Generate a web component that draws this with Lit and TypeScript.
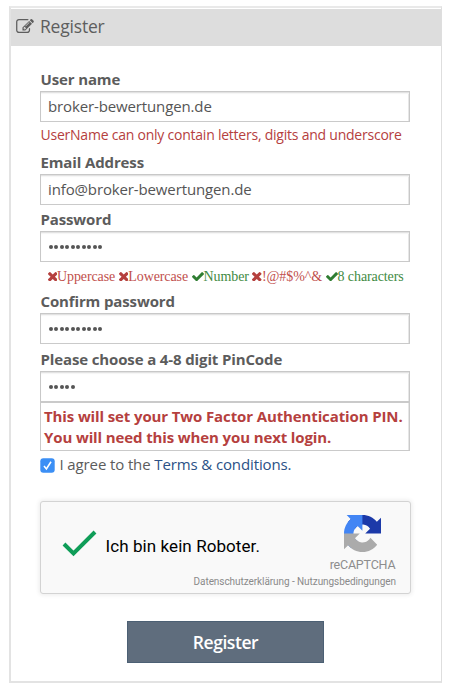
import { LitElement, html, css, svg } from "lit";
import { customElement, property } from "lit/decorators.js";

const TIMES = svg`<path d="M1490 1322q0 40-28 68l-136 136q-28 28-68 28t-68-28l-294-294-294 294q-28 28-68 28t-68-28l-136-136q-28-28-28-68t28-68l294-294-294-294q-28-28-28-68t28-68l136-136q28-28 68-28t68 28l294 294 294-294q28-28 68-28t68 28l136 136q28 28 28 68t-28 68l-294 294 294 294q28 28 28 68z"/>`;
const CHECK = svg`<path d="M1671 566q0 40-28 68l-724 724-136 136q-28 28-68 28t-68-28l-136-136-362-362q-28-28-28-68t28-68l136-136q28-28 68-28t68 28l294 295 656-657q28-28 68-28t68 28l136 136q28 28 28 68z"/>`;

const rules = [
  { ok: false, text: "Uppercase" },
  { ok: false, text: "Lowercase" },
  { ok: true, text: "Number" },
  { ok: false, text: "!@#$%^&" },
  { ok: true, text: "8 characters" },
];

@customElement("form-field")
class FormField extends LitElement {
  @property() label = "";
  @property() value = "";
  @property({ type: Number }) dots = 0;

  static styles = css`
    :host { display: block; }
    .label {
      display: block;
      box-sizing: border-box;
      height: 22px;
      line-height: 20px;
      padding-left: 0.5px;
      font-weight: 700;
      font-size: 15px;
      letter-spacing: -0.13px;
      color: #5c5c5c;
      white-space: nowrap;
    }
    .box {
      box-sizing: border-box;
      height: 31px;
      border: 1px solid #c8c8c8;
      border-bottom-color: #cacaca;
      box-shadow: inset 0 1px 0 #e2e2e2, inset 0 2px 1px #f5f5f5, inset -1px 0 0 #e6e6e6;
      background: #fff;
      padding-left: 7px;
      display: flex;
      align-items: center;
      font-size: 15px;
      letter-spacing: -0.13px;
      color: #555;
    }
    .value { line-height: 20px; margin-bottom: 1px; }
    .dots { display: flex; gap: 1.5px; padding-left: 0.5px; }
    .dot { width: 4px; height: 4px; border-radius: 50%; background: #555; }
  `;

  render() {
    return html`
      <span class="label">${this.label}</span>
      <div class="box">
        ${this.dots
          ? html`<span class="dots">${Array.from({ length: this.dots }, () => html`<i class="dot"></i>`)}</span>`
          : html`<span class="value">${this.value}</span>`}
      </div>
    `;
  }
}

@customElement("captcha-box")
class CaptchaBox extends LitElement {
  static styles = css`
    :host {
      box-sizing: border-box;
      display: grid;
      grid-template-columns: 64px 1fr 68px;
      grid-template-rows: 74px 13px;
      width: 371px;
      height: 93px;
      padding: 0 14px 0 0;
      border: 1px solid #d3d3d3;
      border-radius: 3px;
      background: #f9f9f9;
      box-shadow: 0 0 4px 1px rgba(0, 0, 0, 0.08);
      font-family: Roboto, "Liberation Sans", sans-serif;
    }
    .tick { width: 35px; height: 27px; margin: 28px 0 0 20.5px; }
    .text { font-size: 17px; line-height: 20px; margin: 34px 0 0 0.5px; letter-spacing: 0.08px; color: #000; white-space: nowrap; }
    .brand { display: flex; flex-direction: column; align-items: center; padding-top: 13px; }
    .logo { width: 37px; height: 37px; display: block; flex: none; }
    .name { font-size: 12.5px; letter-spacing: -0.2px; line-height: 14px; margin: 6px 0 0 1px; color: #8d8d8d; }
    .links { grid-column: 1 / -1; text-align: right; font-size: 10px; letter-spacing: -0.07px; line-height: 12px; color: #8a8a8a; white-space: nowrap; }
  `;

  render() {
    return html`
      <svg class="tick" viewBox="0 0 35 27"><path d="M2 14 L11.500 23.500 L33 2" fill="none" stroke="#0f9d58" stroke-width="4"/></svg>
      <span class="text">Ich bin kein Roboter.</span>
      <div class="brand">
        <svg class="logo" viewBox="0 0 64 64">
          <path fill="#1c3aa9" d="M64 31.955l-.033-1.37V4.687l-7.16 7.16C50.948 4.674 42.033.093 32.05.093c-10.4 0-19.622 4.96-25.458 12.64l11.736 11.86a15.55 15.55 0 0 1 4.754-5.334c2.05-1.6 4.952-2.906 8.968-2.906.485 0 .86.057 1.135.163 4.976.393 9.288 3.14 11.828 7.124l-8.307 8.307L64 31.953"/>
          <path fill="#4285f4" d="M31.862.094l-1.37.033H4.594l7.16 7.16C4.58 13.147 0 22.06 0 32.046c0 10.4 4.96 19.622 12.64 25.458L24.5 45.768a15.55 15.55 0 0 1-5.334-4.754c-1.6-2.05-2.906-4.952-2.906-8.968 0-.485.057-.86.163-1.135.393-4.976 3.14-9.288 7.124-11.828l8.307 8.307L31.86.095"/>
          <path fill="#ababab" d="M.001 32.045l.033 1.37v25.898l7.16-7.16c5.86 7.173 14.774 11.754 24.76 11.754 10.4 0 19.622-4.96 25.458-12.64l-11.736-11.86a15.55 15.55 0 0 1-4.754 5.334c-2.05 1.6-4.952 2.906-8.968 2.906-.485 0-.86-.057-1.135-.163-4.976-.393-9.288-3.14-11.828-7.124l8.307-8.307c-10.522.04-22.4.066-27.295-.005"/>
        </svg>
        <span class="name">reCAPTCHA</span>
      </div>
      <div class="links">Datenschutzerklärung - Nutzungsbedingungen</div>
    `;
  }
}

@customElement("app-root")
class AppRoot extends LitElement {
  static styles = css`
    :host {
      display: block;
      box-sizing: border-box;
      height: 692px;
      padding: 6px 8px 0 9px;
      background: #fff;
      font-family: "Open Sans", "Noto Sans", sans-serif;
      font-size: 15px;
      color: #5c5c5c;
    }
    .panel {
      box-sizing: border-box;
      height: 677px;
      padding-top: 1px;
      border: 2px solid #e3e3e3;
      border-right: 1px solid #dedede;
      border-top-color: #e9e9e9;
      background: #fff;
    }
    .head {
      height: 37px;
      background: #ddd;
      display: flex;
      align-items: center;
      padding-left: 5px;
      gap: 6px;
      font-size: 17.5px;
      letter-spacing: -0.2px;
      color: #5e5e5e;
    }
    .title { line-height: 24px; margin-bottom: 3px; }
    .pencil { width: 18px; height: 14px; margin-bottom: 3px; fill: #5e5e5e; }
    .body { padding: 23px 31px 0 29px; }
    .error { height: 26px; line-height: 26px; padding-left: 0.5px; font-size: 14px; letter-spacing: -0.23px; color: #b5403e; white-space: nowrap; }
    .email { margin-top: 4px; }
    .next { margin-top: 4px; }
    .pin { margin-top: 5px; }
    .rules {
      height: 29px;
      display: flex;
      align-items: center;
      gap: 3.6px;
      padding-left: 7.5px;
      font-family: "Liberation Serif", serif;
      font-size: 14px;
      letter-spacing: -0.1px;
      white-space: nowrap;
    }
    .rule { display: flex; align-items: center; color: #c1504d; }
    .rule.ok { color: #3f8a43; }
    .rule svg { width: 9.5px; height: 9.5px; fill: #b5403e; }
    .rule.ok svg { width: 12px; height: 9.5px; fill: #2f7d32; }
    .notice {
      box-sizing: border-box;
      height: 49px;
      border: 1px solid #cacaca;
      box-shadow: inset -1px 0 0 #e6e6e6;
      padding: 3px 0 0 3px;
      font-weight: 700;
      line-height: 21px;
      letter-spacing: -0.12px;
      color: #b5403e;
      white-space: nowrap;
    }
    .agree { display: flex; align-items: center; height: 28px; gap: 4.5px; letter-spacing: -0.12px; white-space: nowrap; }
    .agree-text { line-height: 20px; margin-bottom: 2px; }
    .check { width: 15px; height: 15px; display: block; }
    .link { color: #2b5186; }
    captcha-box { margin-top: 22px; }
    .button {
      box-sizing: border-box;
      display: block;
      width: 197px;
      height: 42px;
      margin: 27px 0 0 87px;
      padding: 0 0 1px;
      border: 1px solid #4c6074;
      background: #5f6d7d;
      color: #fff;
      font-family: inherit;
      font-size: 17.5px;
      letter-spacing: -0.45px;
      font-weight: 600;
    }
  `;

  render() {
    return html`
      <div class="panel">
        <div class="head">
          <svg class="pencil" viewBox="0 128 1792 1408"><path d="M888 1184l116-116-152-152-116 116v56h96v96h56zm440-720q-16-16-33 1l-350 350q-17 17-1 33t33-1l350-350q17-17 1-33zm80 594v190q0 119-84.500 203.500t-203.500 84.500h-832q-119 0-203.500-84.500t-84.500-203.500v-832q0-119 84.500-203.500t203.500-84.500h832q63 0 117 25 15 7 18 23 3 17-9 29l-49 49q-14 14-32 8-23-6-45-6h-832q-66 0-113 47t-47 113v832q0 66 47 113t113 47h832q66 0 113-47t47-113v-126q0-13 9-22l64-64q15-15 35-7t20 29zm-96-738l288 288-672 672h-288v-288zm444 132l-92 92-288-288 92-92q28-28 68-28t68 28l152 152q28 28 28 68t-28 68z"/></svg>
          <span class="title">Register</span>
        </div>
        <div class="body">
          <form-field label="User name" value="broker-bewertungen.de"></form-field>
          <div class="error">UserName can only contain letters, digits and underscore</div>
          <form-field class="email" label="Email Address" value="info@broker-bewertungen.de"></form-field>
          <form-field class="next" label="Password" dots="10"></form-field>
          <div class="rules">
            ${rules.map((r) => html`
              <span class="rule ${r.ok ? "ok" : ""}">
                <svg viewBox=${r.ok ? "121 334 1550 1188" : "302 366 1188 1188"}>${r.ok ? CHECK : TIMES}</svg><span>${r.text}</span>
              </span>`)}
          </div>
          <form-field label="Confirm password" dots="10"></form-field>
          <form-field class="pin" label="Please choose a 4-8 digit PinCode" dots="5"></form-field>
          <div class="notice">This will set your Two Factor Authentication PIN.<br />You will need this when you next login.</div>
          <div class="agree">
            <svg class="check" viewBox="0 0 15 15">
              <rect x=".3" y=".3" width="14.400" height="14.400" rx="3" fill="#3b8ff5"/>
              <path d="M4 8 L6.400 10.900 L11 3.800" fill="none" stroke="#fff" stroke-width="1.600"/>
            </svg>
            <span class="agree-text">I agree to the <span class="link">Terms &amp; conditions.</span></span>
          </div>
          <captcha-box></captcha-box>
          <button class="button">Register</button>
        </div>
      </div>
    `;
  }
}
